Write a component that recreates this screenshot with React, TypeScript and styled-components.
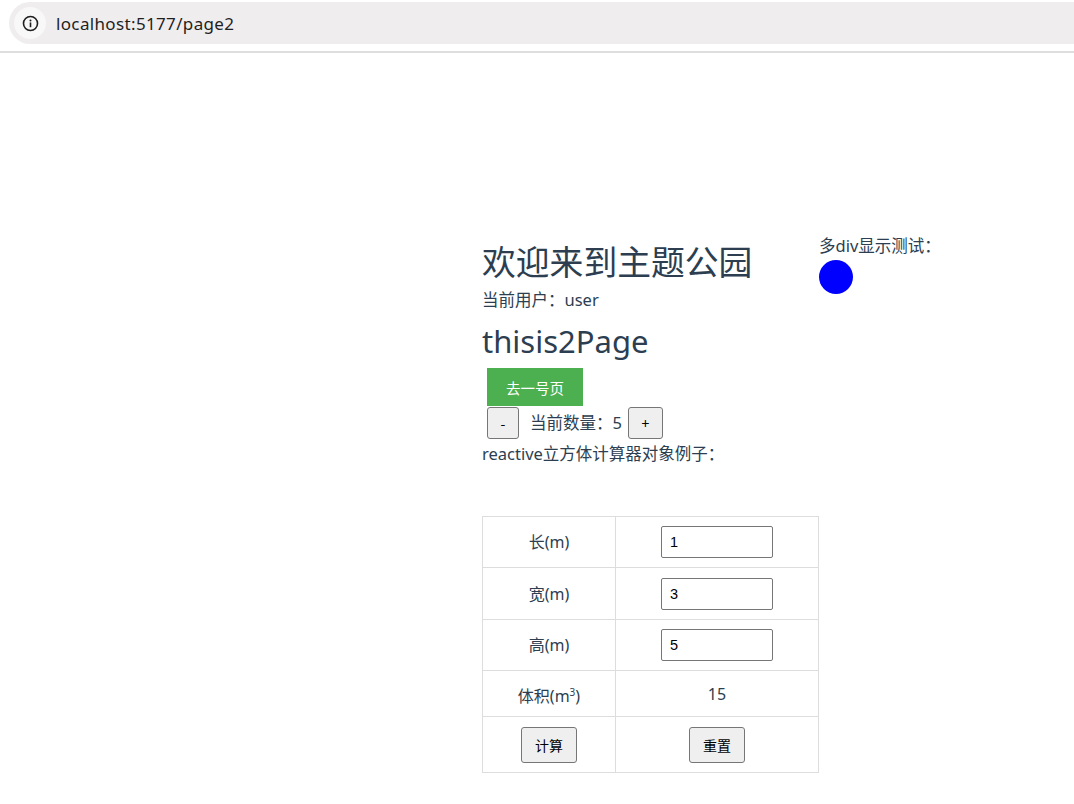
import React from "react";
import styled, { createGlobalStyle } from "styled-components";

const GlobalStyle = createGlobalStyle`
  html, body { margin: 0; padding: 0; background: #ffffff; }
  body {
    font-family: "Noto Sans", "Noto Sans CJK SC", sans-serif;
    color: #2c3e50;
  }
  * { box-sizing: border-box; }
`;

const BrowserBar = styled.header`
  height: 53px;
  padding: 2px 0 0 9px;
  border-bottom: 2px solid #dedede;
  background: #ffffff;
`;

const UrlPill = styled.div`
  height: 42px;
  border-radius: 21px 0 0 21px;
  background: #efedee;
  display: flex;
  align-items: center;
  padding-left: 5px;
  gap: 10px;
`;

const InfoBadge = styled.span`
  width: 32px;
  height: 32px;
  border-radius: 50%;
  background: #f8f8f8;
  display: flex;
  align-items: center;
  justify-content: center;
`;

const UrlText = styled.span`
  font-family: "Noto Sans", sans-serif;
  font-size: 17px;
  color: #1f1f1f;
  letter-spacing: 0.35px;
`;

const Page = styled.main`
  display: flex;
  align-items: flex-start;
  padding: 181px 0 0 482px;
`;

const MainColumn = styled.section`
  width: 337px;
  display: flex;
  flex-direction: column;
  align-items: flex-start;
  padding-top: 8px;
`;

const Title = styled.h1`
  margin: 0;
  font-size: 33.8px;
  font-weight: 400;
  line-height: 40px;
  color: #2c3e50;
`;

const TextLine = styled.p<{ $top?: number }>`
  margin: ${(p) => p.$top ?? 0}px 0 0;
  font-size: 16.5px;
  line-height: 24px;
`;

const SubTitle = styled.h2`
  margin: 10px 0 0;
  font-size: 31px;
  font-weight: 400;
  line-height: 38px;
  color: #2c3e50;
`;

const GreenButton = styled.button`
  margin: 8px 0 0 5px;
  height: 38px;
  width: 96px;
  border: none;
  background: #4caf50;
  color: #ffffff;
  font-family: "Noto Sans CJK SC", sans-serif;
  font-size: 14.5px;
  padding: 0;
`;

const CounterRow = styled.div`
  display: flex;
  align-items: center;
  margin-top: 1px;
  height: 32px;
`;

const SmallButton = styled.button<{ $w: number; $h: number; $ml?: number }>`
  width: ${(p) => p.$w}px;
  height: ${(p) => p.$h}px;
  margin-left: ${(p) => p.$ml ?? 0}px;
  padding: 0;
  background: #efefef;
  border: 1px solid #767676;
  border-radius: 3px;
  color: #000000;
  font-family: "Noto Sans CJK SC", sans-serif;
  font-size: 14px;
`;

const CountText = styled.span`
  font-size: 16.5px;
  line-height: 24px;
  margin: 0 6px 0 11px;
`;

const CalcTable = styled.table`
  margin-top: 50px;
  border-collapse: collapse;
  width: 337px;
  table-layout: fixed;
`;

const Row = styled.tr<{ $h: number }>`
  height: ${(p) => p.$h}px;
`;

const Cell = styled.td<{ $w?: number }>`
  border: 1px solid #dddddd;
  text-align: center;
  vertical-align: middle;
  padding: 0;
  font-size: 16px;
  line-height: 24px;
  ${(p) => (p.$w ? `width: ${p.$w}px;` : "")}
`;

const NumInput = styled.input`
  width: 112px;
  height: 32px;
  border: 1px solid #767676;
  border-radius: 2px;
  padding: 0 8px;
  font-family: "Liberation Sans", Arial, sans-serif;
  font-size: 14.5px;
  color: #000000;
  background: #ffffff;
  display: block;
  margin: 0 auto;
`;

const Sup = styled.sup`
  font-size: 10px;
  vertical-align: 6px;
`;

const SideColumn = styled.aside`
  display: flex;
  flex-direction: column;
  align-items: flex-start;
`;

const Dot = styled.div`
  width: 34px;
  height: 34px;
  border-radius: 50%;
  background: #0000ff;
  margin-top: 2px;
`;

export default function App() {
  return (
    <>
      <GlobalStyle />
      <BrowserBar>
        <UrlPill>
          <InfoBadge>
            <svg width="17" height="17" viewBox="0 0 16 16" fill="none">
              <circle cx="8" cy="8" r="6.6" stroke="#1f1f1f" strokeWidth="1.5" />
              <rect x="7.25" y="7" width="1.5" height="4.5" fill="#1f1f1f" />
              <circle cx="8" cy="5.1" r="0.95" fill="#1f1f1f" />
            </svg>
          </InfoBadge>
          <UrlText>localhost:5177/page2</UrlText>
        </UrlPill>
      </BrowserBar>
      <Page>
        <MainColumn>
          <Title>欢迎来到主题公园</Title>
          <TextLine $top={6}>当前用户：user</TextLine>
          <SubTitle>thisis2Page</SubTitle>
          <GreenButton>去一号页</GreenButton>
          <CounterRow>
            <SmallButton $w={32} $h={32} $ml={5}>-</SmallButton>
            <CountText>当前数量：5</CountText>
            <SmallButton $w={35} $h={32}>+</SmallButton>
          </CounterRow>
          <TextLine $top={3}>reactive立方体计算器对象例子：</TextLine>
          <CalcTable>
            <tbody>
              <Row $h={51}>
                <Cell $w={133}>长(m)</Cell>
                <Cell>
                  <NumInput defaultValue="1" />
                </Cell>
              </Row>
              <Row $h={52}>
                <Cell>宽(m)</Cell>
                <Cell>
                  <NumInput defaultValue="3" />
                </Cell>
              </Row>
              <Row $h={51}>
                <Cell>高(m)</Cell>
                <Cell>
                  <NumInput defaultValue="5" />
                </Cell>
              </Row>
              <Row $h={46}>
                <Cell>
                  体积(m<Sup>3</Sup>)
                </Cell>
                <Cell>15</Cell>
              </Row>
              <Row $h={56}>
                <Cell>
                  <SmallButton $w={56} $h={36}>计算</SmallButton>
                </Cell>
                <Cell>
                  <SmallButton $w={56} $h={36}>重置</SmallButton>
                </Cell>
              </Row>
            </tbody>
          </CalcTable>
        </MainColumn>
        <SideColumn>
          <TextLine>多div显示测试：</TextLine>
          <Dot />
        </SideColumn>
      </Page>
    </>
  );
}
